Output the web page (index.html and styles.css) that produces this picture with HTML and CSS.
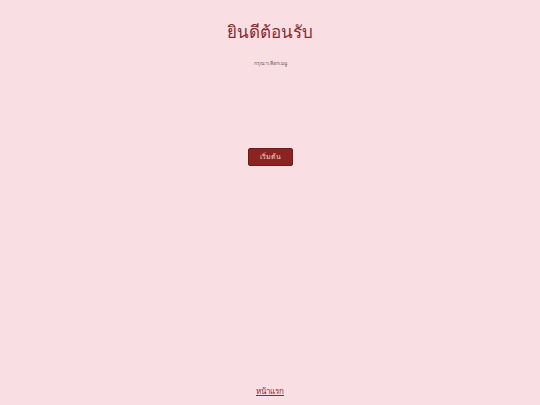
FILE: index.html
```html
<!DOCTYPE html>
<html lang="th">
<head>
<meta charset="utf-8">
<title>ยินดีต้อนรับ</title>
<link rel="stylesheet" href="styles.css">
</head>
<body>
<div class="page">
  <header class="hero">
    <h1 class="title">ยินดีต้อนรับ</h1>
    <p class="subtitle">กรุณาเลือกเมนู</p>
  </header>
  <main class="main">
    <button class="cta">เริ่มต้น</button>
  </main>
  <footer class="footer">
    <a class="link" href="#">หน้าแรก</a>
  </footer>
</div>
</body>
</html>
```
FILE: styles.css
```css
html, body {
  margin: 0;
  padding: 0;
  height: 100%;
}
body {
  background: #f9dfe4;
  font-family: "Liberation Serif", serif;
  color: #8b2a2a;
}
.page {
  height: 100vh;
  display: flex;
  flex-direction: column;
  align-items: center;
}
.hero {
  display: flex;
  flex-direction: column;
  align-items: center;
  padding-top: 21px;
}
.title {
  margin: 0;
  font-size: 17px;
  line-height: 24px;
  font-weight: normal;
  color: #8b2a2a;
}
.subtitle {
  margin: 15px 0 0;
  font-size: 5px;
  line-height: 8px;
  color: #6a5a5c;
}
.main {
  padding-top: 80px;
  flex: 1;
}
.cta {
  display: block;
  width: 45px;
  height: 18px;
  padding: 0;
  background: #8b2420;
  color: #f6d6da;
  border: 1px solid #6e1a18;
  border-radius: 2px;
  font-family: "Liberation Serif", serif;
  font-size: 7px;
  line-height: 9px;
}
.footer {
  padding-bottom: 7px;
}
.link {
  display: block;
  color: #8b2a2a;
  font-size: 8px;
  line-height: 12px;
}
```
